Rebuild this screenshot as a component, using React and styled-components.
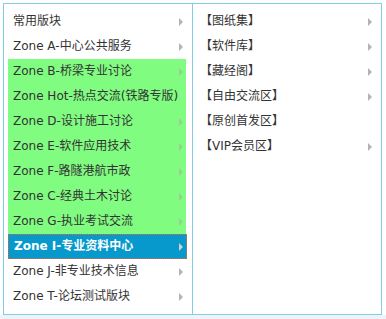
import React from 'react';
import styled, { createGlobalStyle } from 'styled-components';

const GlobalStyle = createGlobalStyle`
  html, body {
    margin: 0;
    padding: 0;
    background: #eef3f7;
  }
  body {
    font-family: 'DejaVu Sans', 'Noto Sans CJK SC', sans-serif;
  }
`;

const forums = [
  { name: '常用版块' },
  { name: 'Zone A-中心公共服务' },
  { name: 'Zone B-桥梁专业讨论', tone: 'hover' },
  { name: 'Zone Hot-热点交流(铁路专版)', tone: 'hover', noArrow: true },
  { name: 'Zone D-设计施工讨论', tone: 'hover' },
  { name: 'Zone E-软件应用技术', tone: 'hover' },
  { name: 'Zone F-路隧港航市政', tone: 'hover' },
  { name: 'Zone C-经典土木讨论', tone: 'hover' },
  { name: 'Zone G-执业考试交流', tone: 'hover' },
  { name: 'Zone I-专业资料中心', tone: 'active' },
  { name: 'Zone J-非专业技术信息' },
  { name: 'Zone T-论坛测试版块' },
];

const subForums = [
  { name: '【图纸集】' },
  { name: '【软件库】' },
  { name: '【藏经阁】' },
  { name: '【自由交流区】' },
  { name: '【原创首发区】', noArrow: true },
  { name: '【VIP会员区】' },
];

const arrowColors = {
  hover: '#93d293',
  active: '#c9d3d8',
  plain: '#b3b3b3',
};

/** Two-column forum drop-down menu */
const App = () => {
  return (
    <>
      <GlobalStyle />
      <St.Page>
        <St.Menu>
          <St.Column $divider>
            {forums.map((f) => (
              <St.Item key={f.name} $tone={f.tone || 'plain'}>
                <St.Label>{f.name}</St.Label>
                {!f.noArrow && <St.Arrow $color={arrowColors[f.tone || 'plain']} />}
              </St.Item>
            ))}
          </St.Column>
          <St.SubColumn>
            {subForums.map((f) => (
              <St.SubItem key={f.name}>
                <St.SubLabel>{f.name}</St.SubLabel>
                {!f.noArrow && <St.Arrow $color={arrowColors.plain} />}
              </St.SubItem>
            ))}
          </St.SubColumn>
        </St.Menu>
      </St.Page>
    </>
  );
};

export default App;

const St = {
  Page: styled.div`
    height: 315px;
    padding: 3px 0 0 3px;
    box-sizing: border-box;
    background: #fff;
  `,

  Menu: styled.div`
    display: flex;
    width: 379px;
    height: 312px;
    box-sizing: border-box;
    border: 1px solid #80cfe9;
    background: #fff;
  `,

  Column: styled.div`
    width: 189px;
    box-sizing: border-box;
    padding: 5px 6px 0 4px;
    border-right: 1px solid #80cfe9;
  `,

  Item: styled.div`
    display: flex;
    align-items: center;
    justify-content: space-between;
    height: 25px;
    padding: 0 3px 0 5px;
    box-sizing: border-box;
    font-size: 12px;
    white-space: nowrap;
    color: ${({ $tone }) => ($tone === 'active' ? '#fff' : '#333')};
    font-weight: ${({ $tone }) => ($tone === 'active' ? 700 : 400)};
    background: ${({ $tone }) =>
      $tone === 'hover' ? '#80fc80' : $tone === 'active' ? '#0799cb' : 'transparent'};
    border: ${({ $tone }) => ($tone === 'active' ? '1px dotted #f2642a' : 'none')};
    margin-right: ${({ $tone }) => ($tone === 'active' ? '-1px' : '0')};
  `,

  Label: styled.span`
    line-height: 25px;
  `,

  Arrow: styled.span`
    flex-shrink: 0;
    width: 0;
    height: 0;
    border-left: 4px solid ${({ $color }) => $color};
    border-top: 4px solid transparent;
    border-bottom: 4px solid transparent;
  `,

  SubColumn: styled.div`
    flex: 1;
    padding: 5px 9px 0 7px;
  `,

  SubItem: styled.div`
    display: flex;
    align-items: center;
    justify-content: space-between;
    height: 25px;
    font-size: 12px;
    color: #333;
    white-space: nowrap;
  `,

  SubLabel: styled.span`
    line-height: 25px;
  `,
};
